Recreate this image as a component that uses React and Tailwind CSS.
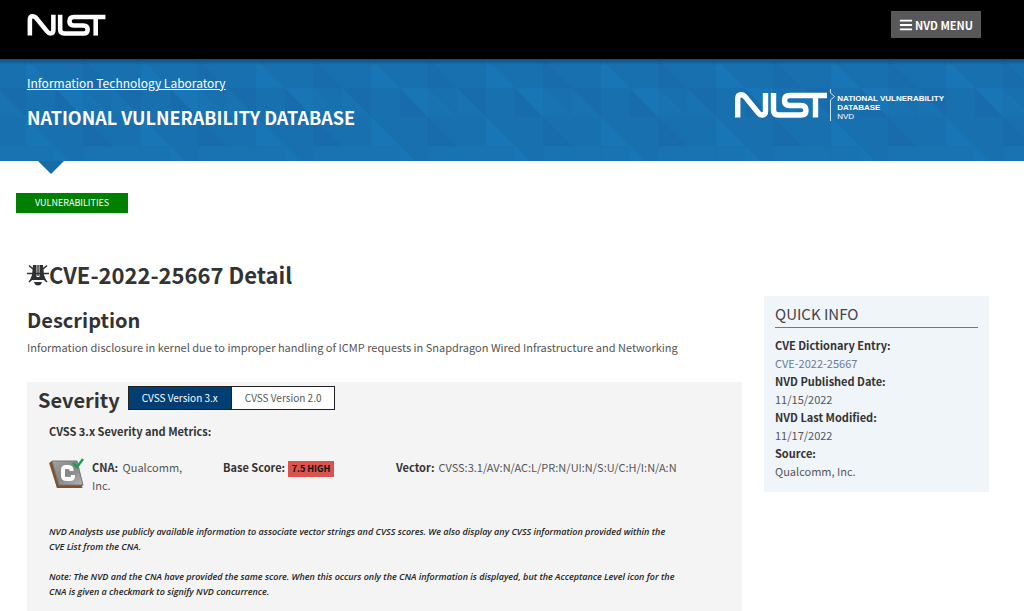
import React from 'react';
import { FaBars } from 'react-icons/fa';

const quickInfo = [
  { term: 'CVE Dictionary Entry:', value: 'CVE-2022-25667', href: '#cve-dictionary' },
  { term: 'NVD Published Date:', value: '11/15/2022' },
  { term: 'NVD Last Modified:', value: '11/17/2022' },
  { term: 'Source:', value: 'Qualcomm, Inc.' },
];

const NistLogo = ({ className }) => (
  <svg viewBox="0 0 92 26" className={className} fill="none" stroke="currentColor" strokeWidth="5.4" role="img" aria-label="NIST">
    <path d="M2.7 25.5 V7 Q2.7 2.7 6 2.7 Q8 2.7 10 4.5 L23 20.5 Q25 23 27 23 Q30.5 23 30.5 19 V1" />
    <path d="M38.5 1 V18 Q38.5 23 43.5 23 H66 Q71 23 71 18.5 Q71 13.5 66 13.5 H54.5 Q49.5 13.5 49.5 8.5 Q49.5 3.5 54.5 3.5 H92" />
    <path d="M80.5 3 V25.5" />
  </svg>
);

const BannerPattern = () => (
  <svg className="absolute inset-0 h-full w-full" aria-hidden="true">
    <defs>
      <pattern id="triangles" width="115" height="115" patternUnits="userSpaceOnUse" x="83" y="0">
        <rect width="115" height="115" fill="#1970af" />
        <path d="M0 0 V29 H29 Z M0 58 V87 H29 Z M29 29 H58 V58 Z M87 29 V58 H115 Z" fill="#186cab" />
        <path d="M58 0 V29 H87 Z M87 29 H115 V58 Z M58 58 V87 H87 Z M87 87 V102 H102 Z" fill="#1875b6" />
        <path d="M0 29 V58 H29 Z M29 29 V58 H58 Z M58 87 H87 V102 H0 V87 Z" fill="#1972b2" />
        <path d="M0 0 V115 M58 0 V115 M0 29 H115 M0 58 H115 M0 87 H115" stroke="#186ca9" strokeOpacity="0.4" />
      </pattern>
      <linearGradient id="bannerShade" x1="0" y1="0" x2="0" y2="1">
        <stop offset="0" stopColor="#0b3a5c" stopOpacity="0.6" />
        <stop offset="1" stopColor="#0b3a5c" stopOpacity="0" />
      </linearGradient>
    </defs>
    <rect width="100%" height="100%" fill="url(#triangles)" />
    <rect width="100%" height="6" fill="url(#bannerShade)" />
  </svg>
);

const BugIcon = () => (
  <svg viewBox="0 0 22 24" className="h-6 w-[22px] shrink-0" aria-hidden="true">
    <path d="M2 3.5 L6 7 M20 3.5 L16 7 M0 11.5 H22 M2 20 L6 16 M20 20 L16 16" fill="none" stroke="#2d2f31" strokeWidth="1.6" />
    <path d="M6 3 H9.5 V15 H12.5 V3 H16 L17 13 L19 18 H3 L5 13 Z M10.3 3 H11.7 V14 H10.3 Z M7 20 H15 Q14 23.5 11 23.5 Q8 23.5 7 20 Z" fill="#2d2f31" />
  </svg>
);

const CnaIcon = () => (
  <svg viewBox="0 0 36 32" className="h-8 w-9 shrink-0" aria-hidden="true">
    <defs>
      <linearGradient id="plate" x1="0" y1="0" x2="1" y2="1">
        <stop offset="0" stopColor="#a2a2a2" />
        <stop offset="0.5" stopColor="#858585" />
        <stop offset="1" stopColor="#b5b5b5" />
      </linearGradient>
    </defs>
    <path d="M0 5 L3 3 L11 29 H33 L34 30 H8 Z" fill="#9a6230" />
    <path d="M1 5 L3 3 L10 27 H34 L32 30 H8 Z" fill="#7a5334" />
    <path d="M3 3 H28 L34 27 H10 Z" fill="url(#plate)" stroke="#777" />
    <path d="M22.5 13 V11 Q22 9 19 9 H17 Q14 9 14 12 V18.5 Q14.5 21 17.5 21 H21 Q24 21 24 18 V17" fill="none" stroke="#fff" strokeWidth="4" />
    <path d="M24 5 L28 9 L34 1" fill="none" stroke="#1f9d58" strokeWidth="2.5" />
  </svg>
);

const SiteHeader = () => (
  <header>
    <div className="flex h-[59px] items-start justify-between bg-black pt-[11px] pr-[43px] pl-[27px]">
      <a href="#nist" className="mt-[3px] text-white">
        <NistLogo className="h-[22px] w-[79px]" />
      </a>
      <button type="button" className="flex h-[27px] items-center gap-0.5 bg-[#58585a] px-2 text-[11px] font-bold text-white">
        <FaBars className="h-3.5 w-3.5" />
        NVD MENU
      </button>
    </div>
    <div className="relative h-[102px] bg-[#1970af] text-white">
      <BannerPattern />
      <div className="relative flex items-start justify-between pr-20 pl-[27px]">
        <div>
          <a href="#itl" className="mt-3.5 block text-xs leading-5 underline">
            Information Technology Laboratory
          </a>
          <p className="mt-3 text-lg leading-6 font-bold">NATIONAL VULNERABILITY DATABASE</p>
        </div>
        <a href="#nvd" className="mt-[29px] flex items-start">
          <NistLogo className="mt-1 h-[26px] w-[92px]" />
          <svg viewBox="0 0 10 34" className="h-[34px] w-2.5" fill="none" stroke="#cfe6f7" aria-hidden="true">
            <path d="M3.5 1 V5 L7.5 8.5 L3.5 12 V33" />
          </svg>
          <span className="mt-1.5 font-['Liberation_Sans',sans-serif] text-[8px] leading-[9px]">
            <strong className="block">NATIONAL VULNERABILITY</strong>
            <strong className="block">DATABASE</strong>
            <span className="block">NVD</span>
          </span>
        </a>
      </div>
      <svg viewBox="0 0 26 13" className="absolute top-full left-[38px] h-[13px] w-[26px]" aria-hidden="true">
        <path d="M0 0 H26 L13 13 Z" fill="#176ba8" />
      </svg>
    </div>
  </header>
);

const SeverityPanel = () => (
  <section className="mt-[26px] bg-[#f4f4f4] px-[11px] pt-1 pb-4">
    <div className="flex items-start">
      <h3 className="text-xl leading-7 font-bold text-[#333]">Severity</h3>
      <div className="ml-2 flex border border-[#222] text-[10px] leading-[22px]">
        <button type="button" className="bg-[#003e73] px-[13px] text-white">CVSS Version 3.x</button>
        <button type="button" className="border-l border-[#222] bg-white px-[13px]">CVSS Version 2.0</button>
      </div>
    </div>
    <div className="px-[11px]">
      <p className="mt-2 font-bold text-[#333]">CVSS 3.x Severity and Metrics:</p>
      <div className="mt-[18px] flex items-start">
        <div className="flex w-[174px] gap-[7px]">
          <CnaIcon />
          <p className="w-24">
            <strong className="mr-0.5 text-[#333]">CNA:</strong> Qualcomm, Inc.
          </p>
        </div>
        <p className="w-[173px]">
          <strong className="text-[#333]">Base Score:</strong>{' '}
          <a href="#score" className="inline-block bg-[#d9534f] px-1 text-[9px] leading-4 font-bold text-[#111]">7.5 HIGH</a>
        </p>
        <p>
          <strong className="mr-1 text-[#333]">Vector:</strong>CVSS:3.1/AV:N/AC:L/PR:N/UI:N/S:U/C:H/I:N/A:N
        </p>
      </div>
      <div className="mt-[30px] max-w-[630px] font-['Open_Sans',sans-serif] text-[9px] leading-[15px] font-semibold text-[#222] italic">
        <p>
          NVD Analysts use publicly available information to associate vector strings and CVSS scores. We also display any
          CVSS information provided within the CVE List from the CNA.
        </p>
        <p className="mt-[15px]">
          Note: The NVD and the CNA have provided the same score. When this occurs only the CNA information is displayed,
          but the Acceptance Level icon for the CNA is given a checkmark to signify NVD concurrence.
        </p>
      </div>
    </div>
  </section>
);

const QuickInfo = () => (
  <aside className="mt-9 w-[225px] shrink-0 bg-[#f0f5fa] px-[11px] pt-1.5 pb-3">
    <h2 className="border-b border-[#5b8092] pb-px text-[15px] leading-6 text-[#444]">QUICK INFO</h2>
    <dl className="mt-2">
      {quickInfo.map(({ term, value, href }) => (
        <React.Fragment key={term}>
          <dt className="font-bold text-[#333]">{term}</dt>
          <dd>{href ? <a href={href} className="text-[#6a7b98]">{value}</a> : value}</dd>
        </React.Fragment>
      ))}
    </dl>
  </aside>
);

const App = () => {
  return (
    <div className="min-h-screen overflow-hidden bg-white font-['Noto_Sans_CJK_JP',sans-serif] text-[11px] leading-[18px] text-[#555]">
      <SiteHeader />
      <div className="mt-8 ml-4 flex">
        <a href="#vulnerabilities" className="bg-[#008000] px-[19px] text-[9px] leading-5 text-white">VULNERABILITIES</a>
      </div>
      <div className="mt-[47px] flex items-start pr-[35px] pl-[27px]">
        <main className="min-w-0 flex-1 pr-[22px]">
          <h1 className="flex items-center text-[22px] leading-7 font-bold text-[#333]">
            <BugIcon />
            CVE-2022-25667 Detail
          </h1>
          <h2 className="mt-[18px] text-xl leading-7 font-bold text-[#333]">Description</h2>
          <p className="mt-1">
            Information disclosure in kernel due to improper handling of ICMP requests in Snapdragon Wired Infrastructure and
            Networking
          </p>
          <SeverityPanel />
        </main>
        <QuickInfo />
      </div>
    </div>
  );
};

export default App;
